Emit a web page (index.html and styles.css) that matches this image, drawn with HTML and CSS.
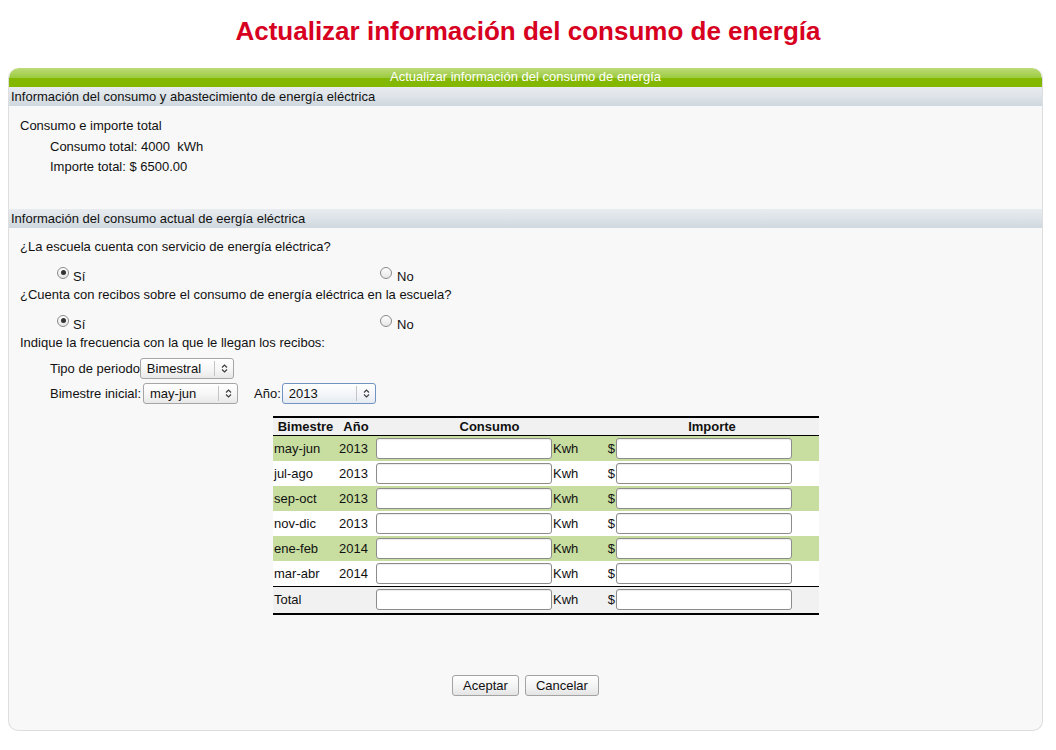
FILE: index.html
```html
<!DOCTYPE html>
<html lang="es">
<head>
<meta charset="utf-8">
<title>Actualizar información del consumo de energía</title>
<link rel="stylesheet" href="styles.css">
</head>
<body>
<h1 class="page-title">Actualizar información del consumo de energía</h1>
<div class="panel">
  <div class="panel-head">Actualizar información del consumo de energía</div>
  <div class="section-head">Información del consumo y abastecimiento de energía eléctrica</div>
  <div class="section-body s1">
    <div class="line">Consumo e importe total</div>
    <div class="line indent">Consumo total: 4000&nbsp; kWh</div>
    <div class="line indent">Importe total: $ 6500.00</div>
  </div>
  <div class="section-head">Información del consumo actual de eergía eléctrica</div>
  <div class="section-body s2">
    <div class="line">¿La escuela cuenta con servicio de energía eléctrica?</div>
    <div class="radio-row">
      <label class="opt"><input class="radio" type="radio" name="srv" checked>Sí</label>
      <label class="opt"><input class="radio" type="radio" name="srv">No</label>
    </div>
    <div class="line">¿Cuenta con recibos sobre el consumo de energía eléctrica en la escuela?</div>
    <div class="radio-row">
      <label class="opt"><input class="radio" type="radio" name="rec" checked>Sí</label>
      <label class="opt"><input class="radio" type="radio" name="rec">No</label>
    </div>
    <div class="line">Indique la frecuencia con la que le llegan los recibos:</div>
    <div class="form-row first">
      <span class="lbl tight">Tipo de periodo</span>
      <span class="select-wrap w94">
        <select class="sel"><option>Bimestral</option></select>
        <svg class="chev" width="7" height="11" viewBox="0 0 7 11"><path d="M1 4.5 L3.5 2 L6 4.5 M1 6.5 L3.5 9 L6 6.5" fill="none" stroke="#3a3a3a" stroke-width="1.1"/></svg>
      </span>
    </div>
    <div class="form-row">
      <span class="lbl">Bimestre inicial:</span>
      <span class="select-wrap w95">
        <select class="sel"><option>may-jun</option></select>
        <svg class="chev" width="7" height="11" viewBox="0 0 7 11"><path d="M1 4.5 L3.5 2 L6 4.5 M1 6.5 L3.5 9 L6 6.5" fill="none" stroke="#3a3a3a" stroke-width="1.1"/></svg>
      </span>
      <span class="lbl year-lbl">Año:</span>
      <span class="select-wrap w94 focused">
        <select class="sel"><option>2013</option></select>
        <svg class="chev" width="7" height="11" viewBox="0 0 7 11"><path d="M1 4.5 L3.5 2 L6 4.5 M1 6.5 L3.5 9 L6 6.5" fill="none" stroke="#3a3a3a" stroke-width="1.1"/></svg>
      </span>
    </div>

    <table class="grid">
      <colgroup>
        <col class="c-bim"><col class="c-anio"><col class="c-cin"><col class="c-kwh"><col class="c-dol"><col class="c-iin"><col class="c-end">
      </colgroup>
      <thead>
        <tr><th>Bimestre</th><th>Año</th><th colspan="2">Consumo</th><th colspan="3">Importe</th></tr>
      </thead>
      <tbody>
        <tr class="alt"><td>may-jun</td><td>2013</td><td class="cin"><input class="txt" type="text"></td><td class="kwh">Kwh</td><td class="dol">$</td><td><input class="txt" type="text"></td><td></td></tr>
        <tr><td>jul-ago</td><td>2013</td><td class="cin"><input class="txt" type="text"></td><td class="kwh">Kwh</td><td class="dol">$</td><td><input class="txt" type="text"></td><td></td></tr>
        <tr class="alt"><td>sep-oct</td><td>2013</td><td class="cin"><input class="txt" type="text"></td><td class="kwh">Kwh</td><td class="dol">$</td><td><input class="txt" type="text"></td><td></td></tr>
        <tr><td>nov-dic</td><td>2013</td><td class="cin"><input class="txt" type="text"></td><td class="kwh">Kwh</td><td class="dol">$</td><td><input class="txt" type="text"></td><td></td></tr>
        <tr class="alt"><td>ene-feb</td><td>2014</td><td class="cin"><input class="txt" type="text"></td><td class="kwh">Kwh</td><td class="dol">$</td><td><input class="txt" type="text"></td><td></td></tr>
        <tr><td>mar-abr</td><td>2014</td><td class="cin"><input class="txt" type="text"></td><td class="kwh">Kwh</td><td class="dol">$</td><td><input class="txt" type="text"></td><td></td></tr>
      </tbody>
      <tfoot>
        <tr><td>Total</td><td></td><td class="cin"><input class="txt" type="text"></td><td class="kwh">Kwh</td><td class="dol">$</td><td><input class="txt" type="text"></td><td></td></tr>
      </tfoot>
    </table>

    <div class="actions">
      <button class="btn" type="button">Aceptar</button>
      <button class="btn" type="button">Cancelar</button>
    </div>
  </div>
</div>
</body>
</html>
```

FILE: styles.css
```css
html, body {
  margin: 0;
  padding: 0;
  background: #ffffff;
}
body {
  margin: 8px;
  font-family: "Liberation Sans", Arial, sans-serif;
  font-size: 13px;
  color: #111;
}
.page-title {
  margin: 8px 0 0;
  line-height: 30px;
  font-size: 26px;
  font-weight: bold;
  text-align: center;
  color: #d7001f;
}
.panel {
  margin: 22px 5px 0 0;
  border: 1px solid #dedede;
  border-top: none;
  border-radius: 10px;
  background: #f8f8f8;
  overflow: hidden;
}
.panel-head {
  height: 19px;
  line-height: 18px;
  text-align: center;
  color: #fff;
  font-size: 13px;
  background: linear-gradient(to bottom, #bddb78 0%, #9ccb40 52%, #84b800 53%, #84b800 100%);
  border-radius: 10px 10px 0 0;
}
.section-head {
  height: 19px;
  line-height: 19px;
  padding-left: 2px;
  font-size: 13px;
  color: #111;
  background: linear-gradient(to bottom, #e8ecf0 0%, #dde3e8 50%, #cfd8df 100%);
}
.section-body {
  padding-left: 11px;
}
.s1 {
  padding-top: 10px;
  padding-bottom: 31px;
}
.s2 {
  padding-top: 9px;
  padding-bottom: 34px;
}
.line {
  line-height: 20.5px;
}
.s2 .line {
  line-height: 20px;
}
.indent {
  padding-left: 30px;
}
.radio-row {
  display: grid;
  grid-template-columns: 323px auto;
  padding-left: 37px;
  height: 28px;
  align-items: end;
}
.opt {
  display: flex;
  align-items: flex-end;
  line-height: 16px;
  padding-bottom: 0;
}
.radio {
  appearance: none;
  -webkit-appearance: none;
  width: 12px;
  height: 12px;
  margin: 0 4px 6px 0;
  border: 1px solid #8a8a8a;
  border-radius: 50%;
  background: linear-gradient(to bottom, #ffffff, #e6e6e6);
  box-sizing: border-box;
  position: relative;
  flex: none;
}
.radio:checked::after {
  content: "";
  position: absolute;
  left: 2.5px;
  top: 2.5px;
  width: 5px;
  height: 5px;
  border-radius: 50%;
  background: #333;
}
.opt:last-child .radio {
  margin-right: 5px;
}
.form-row {
  display: flex;
  align-items: center;
  padding-left: 30px;
  height: 21px;
  margin-top: 4px;
}
.form-row.first {
  margin-top: 5px;
}
.lbl {
  margin-right: 2px;
}
.lbl.tight {
  margin-right: 0;
}
.year-lbl {
  margin-left: 16px;
  margin-right: 1px;
}
.select-wrap {
  position: relative;
  display: inline-block;
  height: 21px;
}
.w94 { width: 94px; }
.w95 { width: 95px; }
.sel {
  appearance: none;
  -webkit-appearance: none;
  width: 100%;
  height: 21px;
  box-sizing: border-box;
  border: 1px solid #a6a6a6;
  border-radius: 3px;
  background: linear-gradient(to bottom, #ffffff 0%, #f6f6f6 55%, #e8e8e8 100%);
  font-family: "Liberation Sans", Arial, sans-serif;
  font-size: 13px;
  color: #111;
  padding: 0 0 0 6px;
  margin: 0;
  outline: none;
}
.select-wrap::after {
  content: "";
  position: absolute;
  top: 3px;
  bottom: 3px;
  right: 19px;
  border-left: 1px solid #c4c4c4;
}
.focused .sel {
  border-color: #7093c2;
  background: linear-gradient(to bottom, #ffffff 0%, #f3f5f9 55%, #e6ebf2 100%);
}
.chev {
  position: absolute;
  right: 6px;
  top: 5px;
  pointer-events: none;
}
.grid {
  margin: 12px 0 0 253px;
  border-collapse: collapse;
  table-layout: fixed;
  width: 546px;
  border-top: 2px solid #000;
  border-bottom: 2px solid #000;
  font-size: 13px;
}
.c-bim { width: 65px; }
.c-anio { width: 36px; }
.c-cin { width: 178px; }
.c-kwh { width: 53px; }
.c-dol { width: 10px; }
.c-iin { width: 178px; }
.c-end { width: 26px; }
.grid th {
  background: #f1f1f1;
  font-weight: bold;
  text-align: center;
  height: 17px;
  line-height: 15px;
  padding: 0;
  border-bottom: 1px solid #000;
}
.grid td {
  padding: 0 0 0 1px;
  height: 25px;
  white-space: nowrap;
  background: #fff;
}
.grid tr.alt td {
  background: #c8dea0;
}
.grid tfoot td {
  background: #f1f1f1;
  border-top: 1px solid #000;
  height: 26px;
}
.grid td.cin {
  padding-left: 2px;
}
.grid td.kwh {
  padding-left: 1px;
}
.grid td.dol {
  padding: 0;
  text-align: right;
}
.txt {
  display: block;
  width: 176px;
  height: 21px;
  box-sizing: border-box;
  margin: 0;
  border: 1px solid #8c8c8c;
  border-radius: 3px;
  background: #fff;
  box-shadow: inset 0 1px 1px rgba(0,0,0,0.08);
  outline: none;
  font-family: "Liberation Sans", Arial, sans-serif;
  font-size: 13px;
  padding: 0 3px;
}
.actions {
  display: flex;
  justify-content: center;
  gap: 6px;
  margin-top: 60px;
  padding-right: 11px;
}
.btn {
  height: 21px;
  padding: 0 10px;
  border: 1px solid #a3a3a3;
  border-radius: 3px;
  background: linear-gradient(to bottom, #ffffff 0%, #f2f2f2 60%, #e4e4e4 100%);
  font-family: "Liberation Sans", Arial, sans-serif;
  font-size: 13px;
  color: #111;
}
```
